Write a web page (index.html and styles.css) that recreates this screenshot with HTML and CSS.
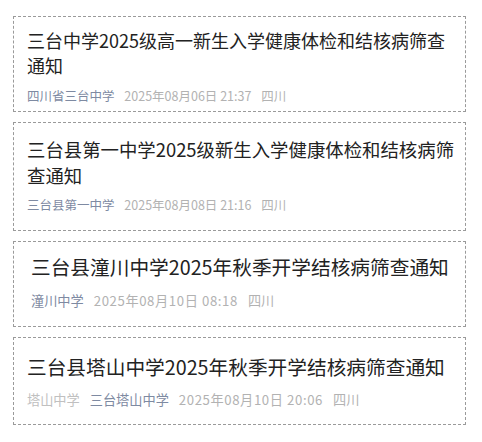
FILE: index.html
```html
<!DOCTYPE html>
<html lang="zh-CN">
<head>
  <meta charset="UTF-8" />
  <meta name="viewport" content="width=device-width, initial-scale=1.0"/>
  <title>结核病筛查通知</title>
  <link rel="stylesheet" href="styles.css">
</head>
<body>
  <div class="list">
    <div class="card card-1">
      <h3 class="title">三台中学2025级高一新生入学健康体检和结核病筛查通知</h3>
      <p class="meta">
        <span class="source">四川省三台中学</span>
        <span class="date">2025年08月06日 21:37</span>
        <span class="place">四川</span>
      </p>
    </div>
    <div class="card card-2">
      <h3 class="title">三台县第一中学2025级新生入学健康体检和结核病筛查通知</h3>
      <p class="meta">
        <span class="source">三台县第一中学</span>
        <span class="date">2025年08月08日 21:16</span>
        <span class="place">四川</span>
      </p>
    </div>
    <div class="card card-3">
      <h3 class="title">三台县潼川中学2025年秋季开学结核病筛查通知</h3>
      <p class="meta">
        <span class="source">潼川中学</span>
        <span class="date">2025年08月10日 08:18</span>
        <span class="place">四川</span>
      </p>
    </div>
    <div class="card card-4">
      <h3 class="title">三台县塔山中学2025年秋季开学结核病筛查通知</h3>
      <p class="meta">
        <span class="tag">塔山中学</span>
        <span class="source">三台塔山中学</span>
        <span class="date">2025年08月10日 20:06</span>
        <span class="place">四川</span>
      </p>
    </div>
  </div>
</body>
</html>
```

FILE: styles.css
```css
body {
  margin: 0;
  background: #fff;
  font-family: "Noto Sans CJK SC", "Noto Sans", sans-serif;
}

.list {
  width: 453px;
  margin: 16px 0 0 13px;
  display: flex;
  flex-direction: column;
  gap: 10px;
}

.card {
  border: 1px dashed #9a9a9a;
  padding: 11px 10px 6px 13px;
}

.title {
  margin: 0;
  font-size: 18px;
  line-height: 25px;
  font-weight: normal;
  color: #222;
}

.meta {
  margin: 9px 0 0;
  font-size: 12.5px;
  line-height: 18px;
  color: #b2b2b2;
  white-space: nowrap;
}

.meta span {
  margin-right: 7px;
}

.source {
  color: #7e8aa2;
}

.tag {
  color: #c0c0c0;
}

/* per-card tweaks, the items were captured at slightly different sizes */
.card-2 {
  padding-top: 13px;
  padding-bottom: 16px;
}

.card-2 .title {
  font-size: 18.4px;
  line-height: 26px;
}

.card-2 .meta {
  margin-top: 8px;
}

.card-3 {
  padding: 11px 10px 15px 17px;
}

.card-4 {
  padding: 15px 10px 14px 13px;
}

.card-3 .title,
.card-4 .title {
  font-size: 19.7px;
  line-height: 28px;
}

.card-3 .meta,
.card-4 .meta {
  margin-top: 10px;
  font-size: 13.2px;
  line-height: 20px;
}

.card-3 .date,
.card-4 .date {
  letter-spacing: 0.6px;
}

.card-4 .meta {
  margin-top: 9px;
}
```
